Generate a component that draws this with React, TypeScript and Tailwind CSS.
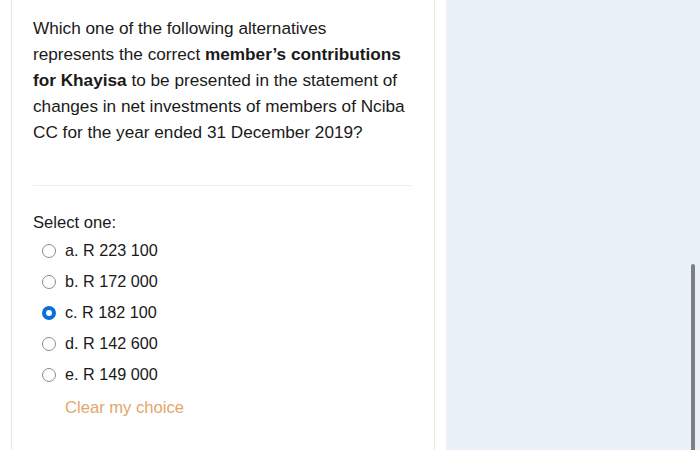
import React from "react";

const options = [
  { l: "a.", v: "R 223 100", sel: false },
  { l: "b.", v: "R 172 000", sel: false },
  { l: "c.", v: "R 182 100", sel: true },
  { l: "d.", v: "R 142 600", sel: false },
  { l: "e.", v: "R 149 000", sel: false },
];

export default function App() {
  return (
    <div
      className="flex w-[700px] h-[450px] bg-white overflow-hidden text-[#1a1a1a]"
      style={{ fontFamily: '"Liberation Sans", Arial, sans-serif' }}
    >
      <div className="w-[446px] h-full pl-[11px]">
        <div className="w-[424px] h-full border-l border-r border-[#e6e6e6] pl-[21px] pr-[22px] pt-[15px]">
          <p className="text-[17.2px] leading-[26px]">
            Which one of the following alternatives
            <br />
            represents the correct <b>member’s contributions</b>
            <br />
            <b>for Khayisa</b> to be presented in the statement of
            <br />
            changes in net investments of members of Nciba
            <br />
            CC for the year ended 31 December 2019?
          </p>
          <div className="mt-[40px] h-px bg-[#ededed]" />
          <div className="mt-[25px] text-[16.6px] leading-[24px]">Select one:</div>
          <div className="flex flex-col">
            {options.map((o) => (
              <div key={o.l} className="h-[31px] flex items-center text-[16.2px]">
                {o.sel ? (
                  <span className="ml-[9px] w-[14px] h-[14px] rounded-full border-[4.5px] border-[#0b6ee0] bg-white" />
                ) : (
                  <span className="ml-[9px] w-[14px] h-[14px] rounded-full border border-[#8c8c8c] bg-white" />
                )}
                <span className="ml-[9px]">
                  {o.l} {o.v}
                </span>
              </div>
            ))}
            <div className="h-[36px] flex items-center pl-[32px] text-[16.6px] text-[#e3a66b]">
              Clear my choice
            </div>
          </div>
        </div>
      </div>
      <div className="flex-1 h-full bg-[#eaf1f9] relative">
        <div className="absolute left-[245px] top-[264px] w-[4px] h-[190px] rounded-full bg-[#7b8085]" />
      </div>
    </div>
  );
}
